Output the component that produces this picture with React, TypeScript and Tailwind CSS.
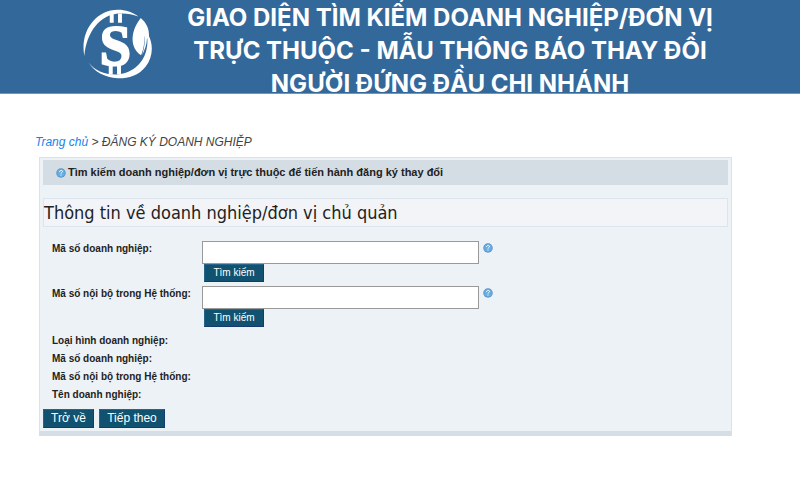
import type { ReactNode } from 'react'

const searchFields = [
  { id: 'enterprise-code', label: 'Mã số doanh nghiệp:' },
  { id: 'internal-code', label: 'Mã số nội bộ trong Hệ thống:' },
]

const details = [
  'Loại hình doanh nghiệp:',
  'Mã số doanh nghiệp:',
  'Mã số nội bộ trong Hệ thống:',
  'Tên doanh nghiệp:',
]

const titleLines = [
  'GIAO DIỆN TÌM KIẾM DOANH NGHIỆP/ĐƠN VỊ',
  'TRỰC THUỘC - MẪU THÔNG BÁO THAY ĐỔI',
  'NGƯỜI ĐỨNG ĐẦU CHI NHÁNH',
]

const Logo = () => (
  <svg viewBox="40 26 212 212" className="h-[70px] w-[70px] shrink-0" fill="#fff" aria-hidden="true">
    {/* Ring arcs */}
    <path d="M44 168 C30 94 78 29 145 28 C169 28 191 35 208 49 C187 41 167 38 147 40 C93 44 51 94 44 168Z" />
    <path d="M57 187 C76 214 109 226 145 224 C192 220 226 187 233 145 C236 129 236 117 232 100 L239 106 C254 137 251 172 230 200 C208 229 174 237 145 236 C106 233 72 215 57 187Z" />
    {/* Leaf */}
    <path d="M215 53 C232 68 241 84 240 112 L234 114 C233 135 227 151 219 166 C226 143 229 124 225 106 C227 128 224 147 216 166 C180 143 184 91 215 53Z" />
    {/* Dollar sign */}
    <path d="M121 40h12v28h-12zM146 40h12v28h-12zM118 196h12v28h-12zM143 196h12v28h-12z" />
    <text x="138" y="195" textAnchor="middle" fontSize="170" fontWeight="700" fontFamily="'Liberation Serif', 'DejaVu Serif', serif" stroke="#fff" strokeWidth="6">
      S
    </text>
  </svg>
)

const HelpIcon = () => (
  <svg viewBox="0 0 20 20" className="h-[10px] w-[10px] shrink-0" aria-hidden="true">
    <circle cx="10" cy="10" r="9.5" fill="#5b94c8" />
    <circle cx="10" cy="10" r="7.5" fill="#69aee2" />
    <path d="M7 8c0-4 6-4 6-1 0 2-3 2-3 4M10 13v2" fill="none" stroke="#fff" strokeWidth="2" />
  </svg>
)

const Button = ({ children, className }: { children: ReactNode; className: string }) => (
  <button
    type="button"
    className={`border border-[#26658a] border-r-[#163a6d] border-b-[#163a6d] bg-[#10526f] font-medium text-white ${className}`}
  >
    {children}
  </button>
)

const App = () => {
  return (
    <div className="bg-white font-['Liberation_Sans',Arial,sans-serif] text-[#222]">
      <header className="flex h-[94px] items-start border-b border-[#7196bb] bg-[#33689b] pr-[53px] pl-[83px]">
        <div className="pt-[9px]">
          <Logo />
        </div>
        <h1 className="flex-1 pt-px text-center font-['Inter',sans-serif] text-2xl leading-[33px] font-bold text-white">
          {titleLines.map((line) => (
            <span key={line} className="block whitespace-nowrap">{line}</span>
          ))}
        </h1>
      </header>

      <main className="pt-10 pr-[68px] pl-[39px]">
        <nav className="-ml-1 text-xs leading-4 italic">
          <a href="#" className="text-[#1682ee]">Trang chủ</a>
          <span className="text-[#444]"> &gt; ĐĂNG KÝ DOANH NGHIỆP</span>
        </nav>

        <form className="mt-[7px] border border-b-[5px] border-[#d9e2ea] border-b-[#d5dee5] bg-[#edf2f6] px-[3px] pt-[2px] pb-[3px]">
          <div className="flex h-[25px] items-center gap-[2px] bg-[#d4dce4] pl-[13px]">
            <HelpIcon />
            <h2 className="text-[11px] font-bold">
              Tìm kiếm doanh nghiệp/đơn vị trực thuộc để tiến hành đăng ký thay đổi
            </h2>
          </div>

          <h3 className="mt-[13px] h-[29px] border border-[#dce5ed] bg-[#f3f4f8] font-['DejaVu_Sans_Condensed','DejaVu_Sans',sans-serif] text-lg leading-[27px]">
            Thông tin về doanh nghiệp/đơn vị chủ quản
          </h3>

          <div className="mt-[14px] pl-[9px]">
            {searchFields.map((field) => (
              <div key={field.id} className="mb-1 flex items-start">
                <label htmlFor={field.id} className="w-[150px] shrink-0 text-[10px] leading-4 font-bold">
                  {field.label}
                </label>
                <div>
                  <div className="flex items-start gap-1">
                    <input
                      id={field.id}
                      type="text"
                      className="h-[23px] w-[277px] border border-[#999] bg-white px-1 text-[11px]"
                    />
                    <span className="pt-[2px]">
                      <HelpIcon />
                    </span>
                  </div>
                  <Button className="ml-[2px] block h-[18px] w-[60px] text-[10px] leading-4">Tìm kiếm</Button>
                </div>
              </div>
            ))}

            <dl className="text-[10px] font-bold">
              {details.map((label) => (
                <div key={label} className="flex h-[18px] items-center">
                  <dt>{label}</dt>
                  <dd />
                </div>
              ))}
            </dl>
          </div>

          <div className="mt-[6px] flex gap-[5px]">
            <Button className="h-[19px] w-[51px] text-xs leading-[17px]">Trở về</Button>
            <Button className="h-[19px] w-[66px] text-xs leading-[17px]">Tiếp theo</Button>
          </div>
        </form>
      </main>
    </div>
  )
}

export default App
